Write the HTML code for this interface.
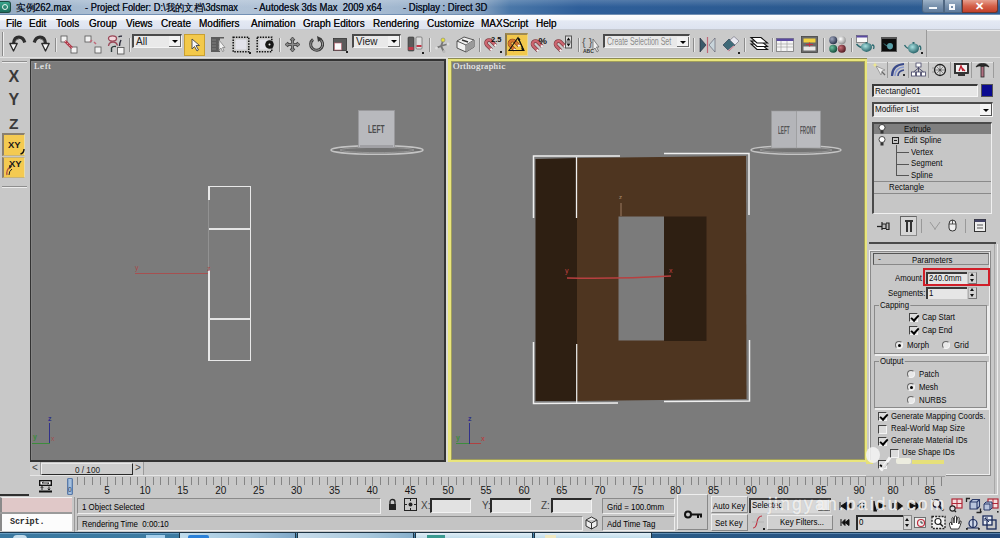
<!DOCTYPE html>
<html><head><meta charset="utf-8">
<style>
*{box-sizing:border-box}
html,body{margin:0;padding:0}
body{width:1000px;height:538px;overflow:hidden;position:relative;background:#c7c7c7;font-family:"Liberation Sans",sans-serif;font-size:10px;color:#111}
.a{position:absolute}
.t{position:absolute;white-space:pre;line-height:1}
svg{position:absolute;overflow:visible}
.mi{position:absolute;top:19px;font-size:10px;color:#0c0c0c;white-space:pre;line-height:1;text-shadow:0 0 .3px #333}
.sep{position:absolute;top:38px;width:2px;height:14px;border-left:1px solid #8c8c8c;border-right:1px solid #e8e8e8}
.dd{position:absolute;top:34px;height:14px;background:#e9e9e9;border-top:2px solid #4a4a4a;border-left:2px solid #4a4a4a;border-bottom:1px solid #f4f4f4;border-right:1px solid #f4f4f4}
.ddb{position:absolute;top:0;right:0;width:12px;height:11px;background:#f2f2f2;border-right:1px solid #6a6a6a;border-bottom:1px solid #6a6a6a}
.ddb:after{content:"";position:absolute;left:3px;top:4px;border-left:3px solid transparent;border-right:3px solid transparent;border-top:3px solid #000}
.ddt{position:absolute;left:2px;top:1px;font-size:10px;color:#222;white-space:pre;line-height:1}
.corner{position:absolute;width:2px;height:2px;background:#222}
</style></head><body>
<style>
.cb{width:9px;height:9px;background:#dcdcdc;border-top:1px solid #444;border-left:1px solid #444;border-right:1px solid #f4f4f4;border-bottom:1px solid #f4f4f4}
.cb:after{content:"";position:absolute;left:1px;top:0.5px;width:5.5px;height:3px;border-left:2px solid #000;border-bottom:2px solid #000;transform:rotate(-48deg);transform-origin:50% 50%}
.cb.off:after{display:none}
.rb{width:8px;height:8px;border-radius:50%;background:#e8e8e8;border:1px solid;border-color:#666 #f4f4f4 #f4f4f4 #666}
.rb.on:after{content:"";position:absolute;left:1.5px;top:1.5px;width:3px;height:3px;border-radius:50%;background:#000}
</style>

<!-- title bar -->
<div class="a" style="left:0;top:0;width:1000px;height:15px;background:linear-gradient(90deg,#93aac2 0%,#a4b9cf 7%,#b4c5d8 15%,#b0c2d6 26%,#a5bad1 38%,#97afc9 44%,#84a0bf 48%,#4a77a8 51%,#2f5f9a 58%,#2b5a90 80%,#2e5d94 100%)"></div>
<div class="a" style="left:0;top:0;width:1000px;height:7px;background:linear-gradient(rgba(255,255,255,.18),rgba(255,255,255,0))"></div>
<div class="a" style="left:0;top:14px;width:1000px;height:1px;background:#7290b4"></div>
<div class="a" style="left:0;top:1px;width:11px;height:12px;background:linear-gradient(#3aa58c,#1d6e5c);border-radius:0 3px 3px 0;border:1px solid #1c4a40;border-left:none"></div>
<div class="a" style="left:2px;top:4px;width:6px;height:6px;border:1.5px solid #e8f4ef;border-radius:50%"></div>
<div class="t" style="left:16px;top:3px;font-size:10px;color:#101828;transform:scaleX(.95);transform-origin:0 0;text-shadow:0 0 .4px #101828">实例262.max</div>
<div class="t" style="left:85px;top:3px;font-size:10px;color:#101828;transform:scaleX(.93);transform-origin:0 0;text-shadow:0 0 .4px #101828">- Project Folder: D:\我的文档\3dsmax</div>
<div class="t" style="left:254px;top:3px;font-size:10px;color:#101828;transform:scaleX(.95);transform-origin:0 0;text-shadow:0 0 .4px #101828">- Autodesk 3ds Max  2009 x64</div>
<div class="t" style="left:403px;top:3px;font-size:10px;color:#101828;transform:scaleX(.95);transform-origin:0 0;text-shadow:0 0 .4px #101828">- Display : Direct 3D</div>
<div class="a" style="left:922px;top:0;width:22px;height:13px;background:linear-gradient(#9fb3c8,#7891ad 50%,#5f7b9c);border:1px solid #4f6782;border-top:none;border-radius:0 0 0 3px"></div>
<div class="a" style="left:929px;top:7px;width:8px;height:2px;background:#f4f8fc"></div>
<div class="a" style="left:944px;top:0;width:18px;height:13px;background:linear-gradient(#9fb3c8,#7891ad 50%,#5f7b9c);border:1px solid #4f6782;border-top:none"></div>
<div class="a" style="left:949px;top:4px;width:6px;height:6px;border:2px solid #f4f8fc"></div>
<div class="a" style="left:962px;top:0;width:36px;height:13px;background:linear-gradient(#e6a190,#d4614a 50%,#c2402a);border:1px solid #70362c;border-top:none;border-radius:0 0 3px 0"></div>
<div class="t" style="left:975px;top:1px;font-size:11px;font-weight:bold;color:#fff">✕</div>

<!-- menu -->
<div class="a" style="left:0;top:15px;width:1000px;height:15px;background:linear-gradient(#fdfdfe 0%,#f6f8fb 30%,#e4e9f3 40%,#dce2ef 100%)"></div>
<div class="a" style="left:0;top:29px;width:1000px;height:1px;background:#c4c8d0"></div>
<div class="mi" style="left:6px">File</div>
<div class="mi" style="left:29px">Edit</div>
<div class="mi" style="left:56px">Tools</div>
<div class="mi" style="left:89px">Group</div>
<div class="mi" style="left:126px">Views</div>
<div class="mi" style="left:161px">Create</div>
<div class="mi" style="left:199px">Modifiers</div>
<div class="mi" style="left:251px">Animation</div>
<div class="mi" style="left:303px">Graph Editors</div>
<div class="mi" style="left:373px">Rendering</div>
<div class="mi" style="left:427px">Customize</div>
<div class="mi" style="left:481px">MAXScript</div>
<div class="mi" style="left:536px">Help</div>

<!-- toolbar -->
<div class="a" style="left:0;top:30px;width:1000px;height:28px;background:#c7c7c7"></div>
<div class="a" style="left:0;top:30px;width:927px;height:27px;background:#cacaca;border-right:1px solid #9a9a9a"></div>
<div class="a" style="left:0;top:57px;width:1000px;height:1px;background:#e2e2e2"></div>
<div class="a" style="left:927px;top:30px;width:73px;height:1px;background:#e9e9e9"></div>
<div class="a" style="left:2px;top:32px;width:2px;height:24px;border-left:1px solid #8a8a8a;border-right:1px solid #f0f0f0"></div>
<!-- undo / redo -->
<svg style="left:9px;top:35px" width="18" height="17" viewBox="0 0 18 17"><path d="M4.5 9 Q5 2.2 10 2.2 Q14 2.2 15.8 7.5" fill="none" stroke="#2e2e2e" stroke-width="3.2"/><path d="M6 7 Q7 4 10 4" fill="none" stroke="#777" stroke-width="0.9"/><path d="M0.8 8.5 L8.2 8.5 L4.5 16 Z" fill="#f6f6f6" stroke="#2a2a2a" stroke-width="1.3" stroke-linejoin="round"/></svg>
<svg style="left:32px;top:35px" width="18" height="17" viewBox="0 0 18 17"><g transform="translate(18,0) scale(-1,1)"><path d="M4.5 9 Q5 2.2 10 2.2 Q14 2.2 15.8 7.5" fill="none" stroke="#2e2e2e" stroke-width="3.2"/><path d="M6 7 Q7 4 10 4" fill="none" stroke="#777" stroke-width="0.9"/><path d="M0.8 8.5 L8.2 8.5 L4.5 16 Z" fill="#f6f6f6" stroke="#2a2a2a" stroke-width="1.3" stroke-linejoin="round"/></g></svg>
<div class="sep" style="left:55px"></div>
<!-- link -->
<svg style="left:60px;top:35px" width="18" height="19" viewBox="0 0 18 19"><rect x="1" y="1" width="6" height="6" fill="#f2f2f2" stroke="#555" stroke-width="0.8"/><rect x="11" y="12" width="6" height="6" fill="#f2f2f2" stroke="#555" stroke-width="0.8"/><path d="M5 6 L12 13" stroke="#b03848" stroke-width="2.5"/><path d="M5 6 L12 13" stroke="#f0c0c8" stroke-width="0.8" stroke-dasharray="1.5 1.5"/></svg>
<svg style="left:84px;top:35px" width="18" height="19" viewBox="0 0 18 19"><rect x="1" y="1" width="6" height="6" fill="#f2f2f2" stroke="#555" stroke-width="0.8"/><rect x="11" y="12" width="6" height="6" fill="#f2f2f2" stroke="#555" stroke-width="0.8"/><path d="M6 7 L8 5 M10 7 L12 9" stroke="#c06878" stroke-width="1.5"/></svg>
<svg style="left:104px;top:32px" width="24" height="24" viewBox="0 0 24 24"><ellipse cx="8.5" cy="6.5" rx="4" ry="2.6" fill="#f2d6dc" stroke="#9a4858" stroke-width="1.3"/><path d="M4.5 14 Q5 10 9 10 Q12.5 10 13.5 13.5" fill="none" stroke="#9a4858" stroke-width="1.3"/><path d="M7.5 20 L7.5 16 Q8.5 14 12 14.5" fill="none" stroke="#2a3a3a" stroke-width="1.4"/><path d="M14.5 5 Q16 3.8 18 4.2 M17 8 Q15.5 11 15.5 14" fill="none" stroke="#2a2a3a" stroke-width="1.4"/><rect x="13.5" y="15.5" width="6.5" height="6.5" fill="#f2f2f2" stroke="#5a5a5a" stroke-width="0.9"/></svg>
<div class="sep" style="left:129px"></div>
<!-- All dropdown -->
<div class="dd" style="left:132px;width:50px"><div class="ddt">All</div><div class="ddb"></div></div>
<!-- select (yellow) -->
<div class="a" style="left:184px;top:34px;width:21px;height:22px;background:#f3c94a;border:1px solid #c9a030"></div>
<svg style="left:191px;top:38px" width="10" height="14" viewBox="0 0 10 14"><path d="M1 1 L1 11 L3.5 8.5 L6 13 L7.5 12 L5 7.5 L8.5 7.5 Z" fill="#f8f8f8" stroke="#444" stroke-width="0.9"/></svg>
<!-- select by name -->
<svg style="left:210px;top:36px" width="16" height="17" viewBox="0 0 16 17"><path d="M1 1 L14 1 L14 2.5 L10 2.5 L10 4 L8.5 5 L10 6 L8.5 8 L10 9 L8.5 11 L10 12 L8.5 14 L10 15 L10 16 L1 16 Z" fill="#5c5c5c"/><path d="M2 4 L6 4 M2 7 L6 7 M2 10 L6 10 M2 13 L6 13" stroke="#8a8a8a" stroke-width="0.8"/><path d="M9 4 L9 14 L11 12 L12.5 15.5 L14 14.8 L12.5 11.5 L15 11.5 Z" fill="#f0f0f0" stroke="#777" stroke-width="0.7"/></svg>
<!-- rect region -->
<svg style="left:232px;top:36px" width="19" height="18" viewBox="0 0 19 18"><rect x="3.5" y="3.5" width="11" height="10" fill="#e2e2ea"/><rect x="1.2" y="1.2" width="15.6" height="14.6" fill="none" stroke="#111" stroke-width="1.5" stroke-dasharray="1.5 1.2"/><rect x="17" y="16" width="2" height="2" fill="#222"/></svg>
<!-- window/crossing -->
<svg style="left:256px;top:36px" width="19" height="17" viewBox="0 0 19 17"><rect x="3.5" y="3.5" width="9" height="10" fill="#e2e2ea"/><rect x="1.2" y="1.2" width="14.6" height="14.6" fill="none" stroke="#111" stroke-width="1.5" stroke-dasharray="1.5 1.2"/><circle cx="13.5" cy="8.5" r="4.3" fill="#151515"/><circle cx="13.5" cy="8.5" r="1" fill="#eee"/></svg>
<div class="sep" style="left:279px"></div>
<!-- move -->
<svg style="left:284px;top:36px" width="17" height="17" viewBox="0 0 17 17"><path d="M8.5 1 L11 4 L9.5 4 L9.5 7.5 L13 7.5 L13 6 L16 8.5 L13 11 L13 9.5 L9.5 9.5 L9.5 13 L11 13 L8.5 16 L6 13 L7.5 13 L7.5 9.5 L4 9.5 L4 11 L1 8.5 L4 6 L4 7.5 L7.5 7.5 L7.5 4 L6 4 Z" fill="#8a8a8a" stroke="#3c3c3c" stroke-width="0.8"/></svg>
<!-- rotate -->
<svg style="left:308px;top:36px" width="17" height="16" viewBox="0 0 17 16"><path d="M5 3.5 A6 6 0 1 0 11.5 3" fill="none" stroke="#3a3a3a" stroke-width="3"/><path d="M5 3.5 A6 6 0 1 0 11.5 3" fill="none" stroke="#9a9a9a" stroke-width="1"/><path d="M9 0 L14 2.5 L10 6 Z" fill="#3a3a3a"/></svg>
<!-- scale -->
<svg style="left:333px;top:38px" width="14" height="13" viewBox="0 0 14 13"><rect x="0.5" y="0.5" width="13" height="12" fill="#5a5a5a" stroke="#333" stroke-width="0.8"/><rect x="1.5" y="5" width="7" height="7" fill="#fafafa" stroke="#c06070" stroke-width="0.6"/></svg>
<div class="corner" style="left:346px;top:51px;width:2px;height:2px"></div>
<!-- View dropdown -->
<div class="dd" style="left:352px;width:49px"><div class="ddt">View</div><div class="ddb"></div></div>
<!-- pivot -->
<svg style="left:407px;top:36px" width="16" height="17" viewBox="0 0 16 17"><rect x="1" y="1" width="6" height="14" rx="1" fill="#5a5a5a" stroke="#333" stroke-width="0.6"/><rect x="9" y="1" width="6" height="12" rx="1" fill="#ddd" stroke="#555" stroke-width="0.6"/><rect x="1.5" y="11" width="5" height="3" fill="#c03848"/><rect x="9.5" y="9" width="5" height="2" fill="#c03848"/></svg>
<div class="corner" style="left:422px;top:52px"></div>
<div class="sep" style="left:429px"></div>
<!-- manipulate -->
<svg style="left:435px;top:37px" width="15" height="16" viewBox="0 0 15 16"><path d="M8 4 L6 9 L1 11 M6 9 L13 7 M6 9 L9 15" stroke="#777" stroke-width="1.8" fill="none"/><circle cx="8" cy="3" r="2" fill="#e6e040" stroke="#777" stroke-width="0.5"/><circle cx="1.5" cy="11" r="1.5" fill="#ddd"/><circle cx="13" cy="7" r="1.5" fill="#ddd"/><circle cx="9" cy="14.5" r="1.5" fill="#bbb"/></svg>
<!-- keyboard override -->
<svg style="left:456px;top:36px" width="19" height="17" viewBox="0 0 19 17"><path d="M1 5 L8 1 L18 4 L18 11 L10 16 L1 12 Z" fill="#f0f0f0" stroke="#444" stroke-width="0.9"/><path d="M1 5 L10 9 L18 4 M10 9 L10 16" stroke="#444" stroke-width="0.9" fill="none"/><path d="M10 9 L18 4 L18 11 L10 16 Z" fill="#9a9a9a"/><path d="M6 4 L12 6" stroke="#333" stroke-width="1.5"/></svg>
<div class="sep" style="left:479px"></div>
<!-- snaps -->
<svg style="left:483px;top:35px" width="20" height="19" viewBox="0 0 20 19"><g transform="translate(6,8) rotate(-45)"><path d="M-3 6.5 L-3 0 A3 3 0 0 1 3 0 L3 6.5" stroke="#7a3a40" stroke-width="3.6" fill="none"/><path d="M-3 6.5 L-3 0 A3 3 0 0 1 3 0 L3 6.5" stroke="#cc6670" stroke-width="2.2" fill="none"/><path d="M-3 5 L-3 7 M3 5 L3 7" stroke="#f4f4f4" stroke-width="2.2"/></g><text x="8" y="6.5" font-family="Liberation Sans" font-weight="bold" font-size="7.5" fill="#111">2.5</text><rect x="17" y="16" width="2" height="2" fill="#222"/></svg>
<div class="a" style="left:505px;top:33px;width:23px;height:23px;background:#f2c84c;border-left:2px solid #8a7a50;border-top:2px solid #a08a50;border-right:1px solid #e8d890;border-bottom:1px solid #e8d890"></div>
<svg style="left:507px;top:35px" width="20" height="20" viewBox="0 0 20 20"><g transform="translate(5.5,8.5) rotate(-45)"><path d="M-3 6.5 L-3 0 A3 3 0 0 1 3 0 L3 6.5" stroke="#8a4a20" stroke-width="3.6" fill="none"/><path d="M-3 6.5 L-3 0 A3 3 0 0 1 3 0 L3 6.5" stroke="#d87830" stroke-width="2.2" fill="none"/><path d="M-3 5 L-3 7 M3 5 L3 7" stroke="#f4f4f4" stroke-width="2.2"/></g><path d="M2 15.5 L17 15.5 L11 2.5 Z" fill="none" stroke="#111" stroke-width="1.1"/><path d="M12 5 L16 14" stroke="#111" stroke-width="1"/><path d="M14 12 L17 15 L15 15.5 Z" fill="#111"/><circle cx="12" cy="4.5" r="1.2" fill="#111"/></svg>
<svg style="left:530px;top:35px" width="20" height="19" viewBox="0 0 20 19"><g transform="translate(5.5,9) rotate(-45)"><path d="M-3 6.5 L-3 0 A3 3 0 0 1 3 0 L3 6.5" stroke="#7a3a40" stroke-width="3.6" fill="none"/><path d="M-3 6.5 L-3 0 A3 3 0 0 1 3 0 L3 6.5" stroke="#cc6670" stroke-width="2.2" fill="none"/><path d="M-3 5 L-3 7 M3 5 L3 7" stroke="#f4f4f4" stroke-width="2.2"/></g><text x="8.5" y="8.5" font-family="Liberation Sans" font-weight="bold" font-size="9.5" fill="#111">%</text></svg>
<svg style="left:553px;top:35px" width="20" height="19" viewBox="0 0 20 19"><g transform="translate(5.5,9) rotate(-45)"><path d="M-3 6.5 L-3 0 A3 3 0 0 1 3 0 L3 6.5" stroke="#7a3a40" stroke-width="3.6" fill="none"/><path d="M-3 6.5 L-3 0 A3 3 0 0 1 3 0 L3 6.5" stroke="#cc6670" stroke-width="2.2" fill="none"/><path d="M-3 5 L-3 7 M3 5 L3 7" stroke="#f4f4f4" stroke-width="2.2"/></g><rect x="12" y="0.5" width="7" height="13" fill="#555"/><rect x="13" y="1.5" width="5" height="5" fill="#ddd"/><rect x="13" y="7.5" width="5" height="5" fill="#ddd"/><path d="M13.5 5.5 L15.5 2.5 L17.5 5.5 Z M13.5 8.5 L15.5 11.5 L17.5 8.5 Z" fill="#111"/></svg>
<div class="sep" style="left:578px"></div>
<!-- named sel -->
<svg style="left:582px;top:36px" width="19" height="18" viewBox="0 0 19 18"><text x="0" y="10" font-family="Liberation Sans" font-size="11" fill="#555">{ }</text><text x="1" y="17" font-family="Liberation Sans" font-weight="bold" font-size="5" fill="#333">ABC</text><path d="M11 3 L11 14 L13 12 L15 16 L16.5 15 L14.5 11 L17 11 Z" fill="#eee" stroke="#666" stroke-width="0.8"/></svg>
<div class="dd" style="left:603px;width:87px"><div class="ddt" style="color:#8c8c8c;font-size:10px;transform:scaleX(.7);transform-origin:0 0">Create Selection Set</div><div class="ddb" style="top:1px;height:10px"></div></div>
<div class="sep" style="left:693px"></div>
<!-- mirror -->
<svg style="left:699px;top:37px" width="17" height="16" viewBox="0 0 17 16"><path d="M1 1 L7 8 L1 15 Z" fill="#3a5a6a" stroke="#223" stroke-width="0.6"/><path d="M16 1 L10 8 L16 15 Z" fill="#c8d4da" stroke="#556" stroke-width="0.6"/><path d="M8.5 0 L8.5 16" stroke="#c06878" stroke-width="1.2"/></svg>
<!-- align -->
<svg style="left:722px;top:36px" width="18" height="18" viewBox="0 0 18 18"><path d="M1 9 L7 3 L13 9 L7 15 Z" fill="#3f6a78" stroke="#234" stroke-width="0.6"/><path d="M8 4 L12 0.5 L17 5 L13 9 Z" fill="#e8e8f0" stroke="#667" stroke-width="0.6"/><path d="M6 15 L12 10" stroke="#d89aa8" stroke-width="1.5"/><rect x="16" y="16" width="2" height="2" fill="#222"/></svg>
<div class="sep" style="left:744px"></div>
<!-- layers -->
<svg style="left:750px;top:36px" width="19" height="16" viewBox="0 0 19 16"><path d="M1 8 L11 8 L17.5 13.5 L7 13.5 Z" fill="#fff" stroke="#111" stroke-width="1.1"/><path d="M1 5 L11 5 L17.5 10.5 L7 10.5 Z" fill="#fff" stroke="#111" stroke-width="1.1"/><path d="M1 1.5 L11 1.5 L17.5 7 L7 7 Z" fill="#fff" stroke="#111" stroke-width="1.1"/></svg>
<div class="sep" style="left:772px"></div>
<!-- curve editor -->
<svg style="left:776px;top:38px" width="18" height="14" viewBox="0 0 18 14"><rect x="0.5" y="0.5" width="17" height="13" fill="#f4f4f4" stroke="#777" stroke-width="0.8"/><rect x="0.5" y="0.5" width="17" height="2.5" fill="#5a4aa0"/><path d="M0 6 L18 6 M0 9 L18 9 M5 3 L5 14 M11 3 L11 14" stroke="#999" stroke-width="0.6"/></svg>
<!-- schematic -->
<svg style="left:801px;top:36px" width="17" height="17" viewBox="0 0 17 17"><rect x="0.5" y="0.5" width="16" height="16" fill="#6a6a6a" stroke="#444" stroke-width="0.8"/><rect x="2.5" y="2.5" width="12" height="4" fill="#f0d040"/><rect x="2.5" y="10.5" width="12" height="4" fill="#e8e8e8"/><path d="M8.5 6.5 L8.5 10.5 M5 8.5 L12 8.5" stroke="#c03040" stroke-width="1.2"/></svg>
<div class="sep" style="left:823px"></div>
<!-- material editor -->
<svg style="left:829px;top:36px" width="17" height="17" viewBox="0 0 17 17"><defs><radialGradient id="g1" cx=".35" cy=".35" r=".7"><stop offset="0" stop-color="#a0a8c0"/><stop offset="1" stop-color="#283048"/></radialGradient><radialGradient id="g2" cx=".35" cy=".35" r=".7"><stop offset="0" stop-color="#fff"/><stop offset="1" stop-color="#909090"/></radialGradient><radialGradient id="g3" cx=".35" cy=".35" r=".7"><stop offset="0" stop-color="#70c0a0"/><stop offset="1" stop-color="#104838"/></radialGradient><radialGradient id="g4" cx=".35" cy=".35" r=".7"><stop offset="0" stop-color="#c87078"/><stop offset="1" stop-color="#501820"/></radialGradient><radialGradient id="tp" cx=".4" cy=".35" r=".7"><stop offset="0" stop-color="#a8e0e0"/><stop offset="1" stop-color="#1e5a60"/></radialGradient></defs><circle cx="4.2" cy="4.2" r="4" fill="url(#g1)"/><circle cx="12.8" cy="4.2" r="4" fill="url(#g2)"/><circle cx="4.2" cy="12.8" r="4" fill="url(#g3)"/><circle cx="12.8" cy="12.8" r="4" fill="url(#g4)"/></svg>
<div class="sep" style="left:851px"></div>
<!-- render setup -->
<svg style="left:856px;top:35px" width="19" height="18" viewBox="0 0 19 18"><rect x="0.5" y="0.5" width="11" height="7" fill="#f8f8f8" stroke="#666" stroke-width="0.7"/><rect x="0.5" y="0.5" width="11" height="2" fill="#5a4aa0"/><path d="M5 12 Q5 8 10.5 8 Q16 8 16 12 Q16 16 10.5 17 Q5 16 5 12 Z" fill="url(#tp)"/><path d="M5 12.5 Q2 11 0.5 9" stroke="#2a6a70" stroke-width="1.4" fill="none"/><path d="M16 10 Q19 10 17.5 14" stroke="#2a6a70" stroke-width="1.3" fill="none"/><rect x="9.5" y="7" width="2" height="1.5" fill="#2a6a70"/></svg>
<!-- rendered frame window -->
<svg style="left:881px;top:37px" width="16" height="15" viewBox="0 0 16 15"><rect x="0" y="0" width="16" height="15" fill="#555"/><rect x="1" y="2" width="14" height="12" fill="#0c0c0c"/><path d="M6 9 Q6 6 9 6 Q12 6 12 9 Q12 12 9 12.5 Q6 12 6 9 Z" fill="#5aa0a8"/><path d="M6 9 Q4 8 3 6.5" stroke="#3a8088" stroke-width="1" fill="none"/></svg>
<!-- quick render -->
<svg style="left:904px;top:41px" width="17" height="13" viewBox="0 0 17 13"><path d="M4 7 Q4 2.5 9.5 2.5 Q15 2.5 15 7 Q15 11.5 9.5 12.5 Q4 11.5 4 7 Z" fill="url(#tp)"/><path d="M4 7.5 Q1.5 6 0.5 4" stroke="#2a6a70" stroke-width="1.4" fill="none"/><path d="M15 5 Q17.5 5 16.5 9" stroke="#2a6a70" stroke-width="1.3" fill="none"/><rect x="8.5" y="1" width="2" height="1.8" fill="#2a6a70"/></svg>
<div class="corner" style="left:921px;top:52px"></div>

<!-- left axis toolbar -->
<div class="a" style="left:0;top:58px;width:30px;height:437px;background:#c8c8c8"></div>
<div class="a" style="left:2px;top:61px;width:25px;height:1px;background:#8e8e8e"></div>
<div class="a" style="left:2px;top:62px;width:25px;height:1px;background:#ececec"></div>
<div class="t" style="left:8.5px;top:68.5px;font-size:16px;font-weight:bold;color:#3a3a3a">X</div>
<div class="t" style="left:8.5px;top:92px;font-size:16px;font-weight:bold;color:#3a3a3a">Y</div>
<div class="t" style="left:9px;top:115.5px;font-size:15.5px;font-weight:bold;color:#3a3a3a">Z</div>
<div class="a" style="left:2px;top:133px;width:23px;height:23px;background:#f4ca52;border-left:2px solid #8a8070;border-top:2px solid #8a8070;border-right:1px solid #e8dca8;border-bottom:1px solid #c8b478"></div>
<div class="t" style="left:7.5px;top:141px;font-size:9px;font-weight:bold;color:#1a1a1a;transform:scaleX(1.05);transform-origin:0 0">XY</div>
<svg style="left:20px;top:149px" width="5" height="6" viewBox="0 0 5 6"><path d="M4 0 Q4 4 0.5 5" stroke="#111" stroke-width="1.4" fill="none"/></svg>
<div class="a" style="left:2px;top:157px;width:23px;height:21px;background:#f4ca52;border-left:2px solid #8a8070;border-top:1px solid #c8b478;border-right:1px solid #e8dca8;border-bottom:1px solid #c8b478"></div>
<div class="t" style="left:9px;top:160px;font-size:9px;font-weight:bold;color:#1a1a1a;transform:scaleX(1.05);transform-origin:0 0">XY</div>
<svg style="left:5px;top:164px" width="11" height="12" viewBox="0 0 11 12"><path d="M2 11 Q1 6 5 3" stroke="#b85040" stroke-width="1.3" fill="none"/><path d="M4 11 Q4 7 7 5" stroke="#222" stroke-width="1" fill="none"/><path d="M4 1 L7 2.5 L4.5 5 Z" fill="#222"/></svg>
<div class="a" style="left:2px;top:186px;width:25px;height:1px;background:#8e8e8e"></div>
<div class="a" style="left:2px;top:187px;width:25px;height:1px;background:#ececec"></div>
<div class="a" style="left:0;top:494px;width:29px;height:1.5px;background:#303030"></div>

<!-- left viewport -->
<div class="a" style="left:29.5px;top:59px;width:416.5px;height:403px;background:#333"></div>
<div class="a" style="left:31px;top:61px;width:413px;height:399px;background:#7b7b7b;box-shadow:inset 1px 1px 0 #858585"></div>
<div class="t" style="left:34px;top:62px;font-family:'Liberation Serif',serif;font-size:9px;color:#e2e2e2;letter-spacing:0.6px;text-shadow:0 0 .5px #ddd">Left</div>
<!-- view cube -->
<svg style="left:328px;top:108px" width="98" height="50" viewBox="0 0 98 50"><ellipse cx="49" cy="42" rx="46" ry="4.2" fill="#6e6e6e" stroke="#c4c4c4" stroke-width="1.6"/><ellipse cx="49" cy="42" rx="37" ry="2.6" fill="#737373" stroke="#a0a0a0" stroke-width="0.8"/><rect x="30.5" y="2.5" width="36" height="37" fill="#b8b9bd" stroke="#9a9a9c" stroke-width="0.8"/><rect x="32" y="37" width="33" height="3" fill="#a0a0a4"/></svg>
<div class="t" style="left:368px;top:124px;font-size:11px;font-weight:bold;color:#4c4c4c;transform:scaleX(.6);transform-origin:0 0">LEFT</div>
<!-- object wireframe -->
<div class="a" style="left:208px;top:186px;width:43px;height:175px;border:1.5px solid #e8e8e8;border-left:none"></div>
<div class="a" style="left:208px;top:186px;width:1.5px;height:14px;background:#e8e8e8"></div>
<div class="a" style="left:208px;top:200px;width:1px;height:70px;background:#929292"></div>
<div class="a" style="left:208px;top:270px;width:1.5px;height:91px;background:#e8e8e8"></div>
<div class="a" style="left:209px;top:228px;width:42px;height:1.5px;background:#e4e4e4"></div>
<div class="a" style="left:209px;top:318px;width:42px;height:1.5px;background:#e4e4e4"></div>
<div class="a" style="left:135px;top:272.5px;width:73px;height:1.2px;background:#a65050"></div>
<div class="t" style="left:135px;top:264px;font-size:7px;color:#a84848">y</div>
<div class="t" style="left:207px;top:265px;font-size:7px;color:#a84848">z</div>
<!-- tripod -->
<div class="a" style="left:49px;top:423px;width:1.3px;height:21px;background:#30308a"></div>
<div class="a" style="left:32px;top:442.5px;width:18px;height:1.3px;background:#3c8c3c"></div>
<div class="t" style="left:48px;top:415px;font-size:7px;font-weight:bold;color:#30308a">z</div>
<div class="t" style="left:33px;top:433px;font-size:7px;font-weight:bold;color:#3c8c3c">y</div>
<div class="t" style="left:51px;top:435px;font-size:7px;color:#a05050">x</div>

<!-- ortho viewport -->
<div class="a" style="left:446px;top:57px;width:2px;height:406px;background:#dcdcd4"></div>
<div class="a" style="left:448px;top:58px;width:418.5px;height:405px;background:#e9e57c;border-top:1px solid #8e8c52"></div>
<div class="a" style="left:452px;top:62px;width:412px;height:397px;background:#7b7b7b;box-shadow:0 0 0 1px #a09e5c"></div>
<div class="t" style="left:453px;top:62px;font-family:'Liberation Serif',serif;font-size:9px;color:#e2e2e2;letter-spacing:0.4px;text-shadow:0 0 .5px #ddd">Orthographic</div>
<!-- view cube -->
<svg style="left:748px;top:108px" width="98" height="50" viewBox="0 0 98 50"><ellipse cx="48" cy="42" rx="45" ry="4.2" fill="#6e6e6e" stroke="#c4c4c4" stroke-width="1.6"/><ellipse cx="48" cy="42" rx="36" ry="2.6" fill="#737373" stroke="#a0a0a0" stroke-width="0.8"/><rect x="23.5" y="3" width="25" height="37" fill="#b4b5b9" stroke="#9a9a9c" stroke-width="0.6"/><rect x="48.5" y="3" width="24" height="37" fill="#babbbf" stroke="#9a9a9c" stroke-width="0.6"/></svg>
<div class="t" style="left:778px;top:124.5px;font-size:10.5px;font-weight:bold;color:#555;transform:scaleX(.44);transform-origin:0 0">LEFT</div>
<div class="t" style="left:800px;top:124.5px;font-size:10.5px;font-weight:bold;color:#555;transform:scaleX(.44);transform-origin:0 0">FRONT</div>
<!-- object -->
<svg style="left:451px;top:61px" width="413" height="399" viewBox="451 61 413 399">
<polygon points="577,158 746,156 746.5,399 577,401" fill="#4e3520"/>
<polygon points="535.5,159 577,158 577,401 535.5,401" fill="#2e1f12"/>
<rect x="618.5" y="216.5" width="45.5" height="124" fill="#7b7b7b"/>
<rect x="664" y="216.5" width="42.5" height="124.5" fill="#2e1f12"/>
<path d="M533.5 218 L533.5 156 L620 156" stroke="#f0f0f0" stroke-width="1.5" fill="none"/>
<path d="M664 153.5 L749 153.5 L749 215" stroke="#f0f0f0" stroke-width="1.5" fill="none"/>
<path d="M576.5 157 L576.5 218" stroke="#f0f0f0" stroke-width="1.3" fill="none"/>
<path d="M533.5 342 L533.5 403.5 L618 403" stroke="#f0f0f0" stroke-width="1.5" fill="none"/>
<path d="M576.7 344 L576.7 403" stroke="#f0f0f0" stroke-width="1.2" fill="none"/>
<path d="M749.5 340 L749.5 401 L664 401.5" stroke="#f0f0f0" stroke-width="1.5" fill="none"/>
<path d="M567 278 Q620 279 671 276" stroke="#b84040" stroke-width="1.3" fill="none"/>
<path d="M621 203 L621 216" stroke="#9a7a60" stroke-width="1" fill="none"/>
</svg>
<div class="t" style="left:565px;top:267px;font-size:7px;color:#c04040">y</div>
<div class="t" style="left:669px;top:267px;font-size:7px;color:#c04040">x</div>
<div class="t" style="left:619px;top:194px;font-size:6px;color:#b09070">z</div>
<!-- tripod -->
<div class="a" style="left:468.5px;top:423px;width:1.5px;height:21px;background:#30308a"></div>
<div class="a" style="left:456px;top:442.5px;width:13px;height:1.3px;background:#3c8c3c"></div>
<div class="a" style="left:469.5px;top:442.5px;width:11px;height:1.3px;background:#b04040"></div>
<div class="t" style="left:468px;top:415px;font-size:7px;font-weight:bold;color:#30308a">z</div>
<div class="t" style="left:456px;top:434px;font-size:7px;font-weight:bold;color:#3c8c3c">y</div>
<div class="t" style="left:481px;top:435px;font-size:7px;font-weight:bold;color:#b04848">x</div>

<!-- command panel -->
<div class="a" style="left:867px;top:58px;width:133px;height:420px;background:#c8c8c8"></div>
<!-- tabs -->
<div class="a" style="left:867px;top:62px;width:127px;height:17px;background:#cbcbcb;border-top:1px solid #e4e4e4"></div>
<div class="a" style="left:887px;top:62px;width:1px;height:16px;background:#9c9c9c"></div>
<div class="a" style="left:908px;top:62px;width:1px;height:16px;background:#9c9c9c"></div>
<div class="a" style="left:928px;top:62px;width:1px;height:16px;background:#9c9c9c"></div>
<div class="a" style="left:950px;top:62px;width:1px;height:16px;background:#9c9c9c"></div>
<div class="a" style="left:971px;top:62px;width:1px;height:16px;background:#9c9c9c"></div>
<div class="a" style="left:993px;top:62px;width:1px;height:16px;background:#9c9c9c"></div>
<svg style="left:872px;top:62px" width="14" height="15" viewBox="0 0 14 15"><path d="M5 5 L13 13" stroke="#666" stroke-width="1.2"/><path d="M4 4 L9 13 L10 9 L13 8 Z" fill="#eee" stroke="#777" stroke-width="0.6"/><path d="M3 0 L3.6 2.6 L6 3 L3.6 3.6 L3 6 L2.4 3.6 L0 3 L2.4 2.4 Z" fill="#f8f080"/></svg>
<svg style="left:891px;top:63px" width="15" height="14" viewBox="0 0 15 14"><path d="M1 13 Q1 2 13 1" stroke="#3a4a8a" stroke-width="2.2" fill="none"/><path d="M4 13 Q4 5 13 4" stroke="#8a9ad0" stroke-width="1.6" fill="none"/><path d="M7 13 Q7 8 13 7" stroke="#3a4a8a" stroke-width="1.6" fill="none"/><rect x="12" y="11" width="2" height="2" fill="#333"/></svg>
<svg style="left:911px;top:62px" width="15" height="15" viewBox="0 0 15 15"><rect x="5" y="1" width="5" height="4" fill="#fff" stroke="#446" stroke-width="0.8"/><rect x="0.5" y="10" width="4" height="4" fill="#fff" stroke="#446" stroke-width="0.8"/><rect x="5.5" y="10" width="4" height="4" fill="#fff" stroke="#446" stroke-width="0.8"/><rect x="10.5" y="10" width="4" height="4" fill="#fff" stroke="#446" stroke-width="0.8"/><path d="M7.5 5 L7.5 10 M2.5 10 L7.5 6 L12.5 10" stroke="#446" stroke-width="0.9" fill="none"/></svg>
<svg style="left:932px;top:63px" width="15" height="14" viewBox="0 0 15 14"><circle cx="8" cy="7" r="5.5" fill="#d8d8d8" stroke="#222" stroke-width="1.3"/><circle cx="8" cy="7" r="1.3" fill="#333"/><path d="M8 2 L8 12 M3 7 L13 7 M4.5 3.5 L11.5 10.5 M11.5 3.5 L4.5 10.5" stroke="#555" stroke-width="0.6"/><path d="M0 5 L2 5 M0 9 L2 9" stroke="#999" stroke-width="1"/></svg>
<svg style="left:954px;top:63px" width="15" height="14" viewBox="0 0 15 14"><rect x="0.5" y="0.5" width="14" height="10" fill="#333" stroke="#222" stroke-width="0.8"/><rect x="2" y="2" width="11" height="7" fill="#f2f2f2"/><path d="M5 8 L7 3 L9 8 M8 5 L11 8" stroke="#c02030" stroke-width="1.4" fill="none"/><rect x="4" y="11" width="7" height="2" fill="#333"/></svg>
<svg style="left:975px;top:62px" width="15" height="16" viewBox="0 0 15 16"><path d="M1 5 Q3 1 7.5 1.5 Q12 1 14 5 Q11 3.5 9 4 L9 4.5 L6 4.5 L6 4 Q4 3.5 1 5 Z" fill="#2a2a2a" stroke="#111" stroke-width="0.6"/><rect x="6" y="4.5" width="3" height="10.5" fill="#b07080" stroke="#2a2a2a" stroke-width="0.8"/></svg>
<!-- name field -->
<div class="a" style="left:872px;top:84px;width:106px;height:13px;background:#e6e6e6;border-top:2px solid #3a3a3a;border-left:2px solid #3a3a3a;border-bottom:1px solid #f6f6f6;border-right:1px solid #f6f6f6"></div>
<div class="t" style="left:875px;top:87px;font-size:9px;color:#111;transform:scaleX(.9);transform-origin:0 0">Rectangle01</div>
<div class="a" style="left:981px;top:84px;width:12px;height:13px;background:#0a0a90;border:1px solid #555"></div>
<!-- modifier list -->
<div class="a" style="left:872px;top:102px;width:121px;height:15px;background:#e6e6e6;border-top:2px solid #4a4a4a;border-left:2px solid #4a4a4a;border-bottom:1px solid #f6f6f6;border-right:1px solid #f6f6f6"></div>
<div class="t" style="left:875px;top:105px;font-size:9px;color:#111;transform:scaleX(.9);transform-origin:0 0">Modifier List</div>
<div class="a" style="left:980px;top:104px;width:12px;height:12px;background:#f4f4f4;border-right:1px solid #555;border-bottom:1px solid #555"></div>
<div class="a" style="left:983px;top:109px;border-left:3px solid transparent;border-right:3px solid transparent;border-top:3px solid #000"></div>
<!-- stack -->
<div class="a" style="left:872px;top:122px;width:120px;height:92px;background:#c6c6c6;border-top:2px solid #4a4a4a;border-left:2px solid #4a4a4a;border-bottom:1px solid #f0f0f0;border-right:1px solid #f0f0f0"></div>
<div class="a" style="left:874px;top:124px;width:117px;height:10px;background:#7f7f7f"></div>
<svg style="left:878px;top:124px" width="8" height="10" viewBox="0 0 8 10"><circle cx="4" cy="3.5" r="3" fill="#fff" stroke="#222" stroke-width="0.8"/><rect x="2.5" y="6.5" width="3" height="3" fill="#333"/></svg>
<div class="t" style="left:904px;top:125px;font-size:8.5px;color:#0a0a0a;transform:scaleX(.92);transform-origin:0 0">Extrude</div>
<svg style="left:878px;top:136px" width="8" height="10" viewBox="0 0 8 10"><circle cx="4" cy="3.5" r="3" fill="#fff" stroke="#222" stroke-width="0.8"/><rect x="2.5" y="6.5" width="3" height="3" fill="#333"/></svg>
<div class="a" style="left:892px;top:137px;width:7px;height:7px;border:1px solid #222"></div>
<div class="a" style="left:894px;top:140px;width:3px;height:1px;background:#222"></div>
<div class="t" style="left:904px;top:136px;font-size:8.5px;color:#0a0a0a;transform:scaleX(.92);transform-origin:0 0">Edit Spline</div>
<div class="a" style="left:896px;top:145px;width:1px;height:31px;background:#555"></div>
<div class="a" style="left:896px;top:152px;width:13px;height:1px;background:#555"></div>
<div class="a" style="left:896px;top:164px;width:13px;height:1px;background:#555"></div>
<div class="a" style="left:896px;top:175px;width:13px;height:1px;background:#555"></div>
<div class="t" style="left:911px;top:148px;font-size:8.5px;color:#0a0a0a;transform:scaleX(.92);transform-origin:0 0">Vertex</div>
<div class="t" style="left:911px;top:159px;font-size:8.5px;color:#0a0a0a;transform:scaleX(.92);transform-origin:0 0">Segment</div>
<div class="t" style="left:911px;top:171px;font-size:8.5px;color:#0a0a0a;transform:scaleX(.92);transform-origin:0 0">Spline</div>
<div class="a" style="left:874px;top:181px;width:117px;height:1px;background:#8a8a8a"></div>
<div class="t" style="left:889px;top:183px;font-size:8.5px;color:#0a0a0a;transform:scaleX(.92);transform-origin:0 0">Rectangle</div>
<div class="a" style="left:874px;top:193px;width:117px;height:1px;background:#8a8a8a"></div>
<!-- stack buttons -->
<svg style="left:877px;top:221px" width="13" height="10" viewBox="0 0 13 10"><path d="M0 5.5 L5 5.5" stroke="#222" stroke-width="1.3"/><path d="M5 1 L5 9 M5 3 L9 3 L9 7.5 L5 7.5 M9 2 L12 2 L12 8.5 L9 8.5" stroke="#222" stroke-width="1.2" fill="#bbb"/></svg>
<div class="a" style="left:900px;top:216px;width:17px;height:20px;background:#d6d6d6;border:1px solid #8a8a8a;border-top-color:#666;border-left-color:#666"></div>
<div class="a" style="left:906px;top:220px;width:2px;height:12px;background:#333"></div>
<div class="a" style="left:910px;top:220px;width:2px;height:12px;background:#333"></div>
<div class="a" style="left:905px;top:220px;width:8px;height:2px;background:#333"></div>
<div class="a" style="left:921px;top:219px;width:1px;height:14px;background:#999"></div>
<svg style="left:929px;top:221px" width="12" height="10" viewBox="0 0 12 10"><path d="M1 1 L6 8 L11 1 M6 8 L6 9" stroke="#999" stroke-width="1" fill="none"/></svg>
<svg style="left:948px;top:219px" width="9" height="13" viewBox="0 0 9 13"><path d="M1 5 Q1 1 4.5 1 Q8 1 8 5 L8 9 Q8 12 4.5 12 Q1 12 1 9 Z" fill="#eee" stroke="#333" stroke-width="1"/><path d="M4.5 1 L4.5 5 M1 5 L8 5" stroke="#333" stroke-width="0.8"/></svg>
<div class="a" style="left:965px;top:219px;width:1px;height:14px;background:#999"></div>
<svg style="left:974px;top:219px" width="12" height="13" viewBox="0 0 12 13"><rect x="0.5" y="0.5" width="11" height="12" fill="#eee" stroke="#333" stroke-width="1"/><rect x="0.5" y="0.5" width="11" height="2.5" fill="#446"/><path d="M3 6 L9 6 M3 9 L9 9" stroke="#555" stroke-width="1"/></svg>
<div class="a" style="left:869px;top:242px;width:127px;height:2px;background:#4a4a4a"></div><div class="a" style="left:994px;top:244px;width:1px;height:250px;background:#a8a8a8"></div><div class="a" style="left:997px;top:244px;width:1px;height:251px;background:#eeeeee"></div><div class="a" style="left:943px;top:494px;width:55px;height:1px;background:#eeeeee"></div>
<!-- parameters rollout -->
<div class="a" style="left:869px;top:250px;width:122px;height:226px;border:1px solid #eee;border-right-color:#8a8a8a;border-bottom-color:#8a8a8a;box-shadow:inset 1px 1px 0 #8a8a8a, inset -1px -1px 0 #eee"></div>
<div class="a" style="left:873px;top:253px;width:116px;height:12px;background:#c4c4c4;border:1px solid #555;border-right-color:#888;border-bottom-color:#888"></div>
<div class="t" style="left:878px;top:255px;font-size:9px;color:#333">-</div>
<div class="t" style="left:912px;top:256px;font-size:8.5px;color:#0a0a0a;transform:scaleX(.92);transform-origin:0 0">Parameters</div>
<div class="t" style="left:895px;top:274px;font-size:8.5px;color:#0a0a0a;transform:scaleX(.92);transform-origin:0 0">Amount</div>
<div class="a" style="left:926px;top:272px;width:41px;height:12px;background:#e6e6e6;border-top:2px solid #3a3a3a;border-left:2px solid #3a3a3a"></div>
<div class="t" style="left:929px;top:274px;font-size:8.5px;color:#0a0a0a;transform:scaleX(.92);transform-origin:0 0">240.0mm</div>
<div class="a" style="left:968px;top:272px;width:9px;height:12px;background:#d2d2d2;border:1px solid #b0b0b0;border-right-color:#777;border-bottom-color:#777"></div>
<div class="a" style="left:970px;top:273px;border-left:2.5px solid transparent;border-right:2.5px solid transparent;border-bottom:3px solid #111"></div>
<div class="a" style="left:970px;top:279px;border-left:2.5px solid transparent;border-right:2.5px solid transparent;border-top:3px solid #111"></div>
<div class="a" style="left:922.5px;top:267.5px;width:67px;height:18.5px;border:2.2px solid #d01e28"></div>
<div class="t" style="left:888px;top:289px;font-size:8.5px;color:#0a0a0a;transform:scaleX(.92);transform-origin:0 0">Segments:</div>
<div class="a" style="left:926px;top:287px;width:41px;height:12px;background:#e6e6e6;border-top:2px solid #3a3a3a;border-left:2px solid #3a3a3a"></div>
<div class="t" style="left:929px;top:289px;font-size:8.5px;color:#0a0a0a;transform:scaleX(.92);transform-origin:0 0">1</div>
<div class="a" style="left:968px;top:287px;width:9px;height:12px;background:#d2d2d2;border:1px solid #b0b0b0;border-right-color:#777;border-bottom-color:#777"></div>
<div class="a" style="left:970px;top:288px;border-left:2.5px solid transparent;border-right:2.5px solid transparent;border-bottom:3px solid #111"></div>
<div class="a" style="left:970px;top:294px;border-left:2.5px solid transparent;border-right:2.5px solid transparent;border-top:3px solid #111"></div>
<!-- capping -->
<div class="a" style="left:874px;top:305px;width:114px;height:50px;border:1px solid #8a8a8a;border-right-color:#eee;border-bottom-color:#eee;box-shadow:inset -1px -1px 0 #8a8a8a, 1px 1px 0 #eee"></div>
<div class="t" style="left:879px;top:301px;font-size:8.5px;color:#0a0a0a;transform:scaleX(.92);transform-origin:0 0;background:#c8c8c8;padding:0 1px">Capping</div>
<div class="a cb" style="left:909px;top:313px"></div>
<div class="t" style="left:922px;top:313px;font-size:8.5px;color:#0a0a0a;transform:scaleX(.92);transform-origin:0 0">Cap Start</div>
<div class="a cb" style="left:909px;top:326px"></div>
<div class="t" style="left:922px;top:326px;font-size:8.5px;color:#0a0a0a;transform:scaleX(.92);transform-origin:0 0">Cap End</div>
<div class="a rb on" style="left:895px;top:341px"></div>
<div class="t" style="left:907px;top:341px;font-size:8.5px;color:#0a0a0a;transform:scaleX(.92);transform-origin:0 0">Morph</div>
<div class="a rb" style="left:942px;top:341px"></div>
<div class="t" style="left:954px;top:341px;font-size:8.5px;color:#0a0a0a;transform:scaleX(.92);transform-origin:0 0">Grid</div>
<!-- output -->
<div class="a" style="left:874px;top:361px;width:114px;height:48px;border:1px solid #8a8a8a;border-right-color:#eee;border-bottom-color:#eee;box-shadow:inset -1px -1px 0 #8a8a8a, 1px 1px 0 #eee"></div>
<div class="t" style="left:879px;top:357px;font-size:8.5px;color:#0a0a0a;transform:scaleX(.92);transform-origin:0 0;background:#c8c8c8;padding:0 1px">Output</div>
<div class="a rb" style="left:907px;top:370px"></div>
<div class="t" style="left:919px;top:370px;font-size:8.5px;color:#0a0a0a;transform:scaleX(.92);transform-origin:0 0">Patch</div>
<div class="a rb on" style="left:907px;top:383px"></div>
<div class="t" style="left:919px;top:383px;font-size:8.5px;color:#0a0a0a;transform:scaleX(.92);transform-origin:0 0">Mesh</div>
<div class="a rb" style="left:907px;top:396px"></div>
<div class="t" style="left:919px;top:396px;font-size:8.5px;color:#0a0a0a;transform:scaleX(.92);transform-origin:0 0">NURBS</div>
<div class="a cb" style="left:878px;top:412px"></div>
<div class="t" style="left:891px;top:412px;font-size:8.5px;color:#0a0a0a;transform:scaleX(.92);transform-origin:0 0">Generate Mapping Coords.</div>
<div class="a cb off" style="left:878px;top:425px"></div>
<div class="t" style="left:891px;top:424px;font-size:8.5px;color:#0a0a0a;transform:scaleX(.92);transform-origin:0 0">Real-World Map Size</div>
<div class="a cb" style="left:878px;top:437px"></div>
<div class="t" style="left:891px;top:436px;font-size:8.5px;color:#0a0a0a;transform:scaleX(.92);transform-origin:0 0">Generate Material IDs</div>
<div class="a cb off" style="left:890px;top:449px"></div>
<div class="t" style="left:902px;top:448px;font-size:8.5px;color:#0a0a0a;transform:scaleX(.92);transform-origin:0 0">Use Shape IDs</div>
<div class="a cb" style="left:878px;top:460px"></div>

<!-- time slider -->
<div class="a" style="left:30px;top:462px;width:837px;height:14px;background:#c8c8c8"></div>
<div class="a" style="left:30px;top:462px;width:11px;height:13px;background:#cfcfcf;border-right:1px solid #9a9a9a"></div>
<div class="t" style="left:32px;top:463px;font-size:10px;color:#444">&lt;</div>
<div class="a" style="left:41px;top:462.5px;width:91.5px;height:12.5px;background:#cdcdcd;border-bottom:1.5px solid #2a2a2a;border-right:1px solid #2a2a2a;border-left:1px solid #f0f0f0;border-top:1px solid #e8e8e8"></div>
<div class="t" style="left:74.5px;top:464.5px;font-size:9.5px;color:#1a1a1a;transform:scaleX(.86);transform-origin:0 0">0 / 100</div>
<div class="a" style="left:133px;top:462px;width:11px;height:13px;background:#cfcfcf;border-right:1px solid #9a9a9a"></div>
<div class="t" style="left:135px;top:463px;font-size:10px;color:#444">&gt;</div>
<div class="a" style="left:30px;top:475px;width:837px;height:1px;background:#e6e6e6"></div>
<!-- track bar -->
<div class="a" style="left:30px;top:476px;width:920px;height:20px;background:#c8c8c8"></div>
<svg style="left:39px;top:480px" width="13" height="13" viewBox="0 0 13 13"><rect x="0.7" y="0.7" width="11.6" height="4.6" fill="#fafafa" stroke="#111" stroke-width="1.4"/><path d="M3 3 L10 3 M3 3 L4.5 2 M10 3 L8.5 4" stroke="#111" stroke-width="0.9"/><path d="M3 6.5 L3 10 M1.8 7.8 L3 6.5 L4.2 7.8 M10 6.5 L10 10 M8.8 8.7 L10 10 L11.2 8.7" stroke="#111" stroke-width="0.9" fill="none"/><rect x="0" y="10.5" width="13" height="2" fill="#111"/></svg>
<div class="a" style="left:67px;top:478px;width:6px;height:17px;background:linear-gradient(90deg,#7b9cc4,#b4cce6,#7b9cc4);border:1px solid #5a7aa8;border-radius:1px"></div>
<div class="t" style="left:67.5px;top:486px;font-size:8px;color:#2a3a5a;transform:scaleX(.8);transform-origin:0 0">0</div>
<div class="a" style="left:76.8px;top:477px;width:1px;height:8px;background:#858585"></div>
<div class="a" style="left:84.4px;top:477px;width:1px;height:8px;background:#858585"></div>
<div class="a" style="left:91.9px;top:477px;width:1px;height:8px;background:#858585"></div>
<div class="a" style="left:99.5px;top:477px;width:1px;height:8px;background:#858585"></div>
<div class="a" style="left:107.1px;top:477px;width:1px;height:9px;background:#858585"></div>
<div class="a" style="left:114.7px;top:477px;width:1px;height:8px;background:#858585"></div>
<div class="a" style="left:122.3px;top:477px;width:1px;height:8px;background:#858585"></div>
<div class="a" style="left:129.8px;top:477px;width:1px;height:8px;background:#858585"></div>
<div class="a" style="left:137.4px;top:477px;width:1px;height:8px;background:#858585"></div>
<div class="a" style="left:145.0px;top:477px;width:1px;height:9px;background:#858585"></div>
<div class="a" style="left:152.6px;top:477px;width:1px;height:8px;background:#858585"></div>
<div class="a" style="left:160.2px;top:477px;width:1px;height:8px;background:#858585"></div>
<div class="a" style="left:167.7px;top:477px;width:1px;height:8px;background:#858585"></div>
<div class="a" style="left:175.3px;top:477px;width:1px;height:8px;background:#858585"></div>
<div class="a" style="left:182.9px;top:477px;width:1px;height:9px;background:#858585"></div>
<div class="a" style="left:190.5px;top:477px;width:1px;height:8px;background:#858585"></div>
<div class="a" style="left:198.1px;top:477px;width:1px;height:8px;background:#858585"></div>
<div class="a" style="left:205.6px;top:477px;width:1px;height:8px;background:#858585"></div>
<div class="a" style="left:213.2px;top:477px;width:1px;height:8px;background:#858585"></div>
<div class="a" style="left:220.8px;top:477px;width:1px;height:9px;background:#858585"></div>
<div class="a" style="left:228.4px;top:477px;width:1px;height:8px;background:#858585"></div>
<div class="a" style="left:236.0px;top:477px;width:1px;height:8px;background:#858585"></div>
<div class="a" style="left:243.5px;top:477px;width:1px;height:8px;background:#858585"></div>
<div class="a" style="left:251.1px;top:477px;width:1px;height:8px;background:#858585"></div>
<div class="a" style="left:258.7px;top:477px;width:1px;height:9px;background:#858585"></div>
<div class="a" style="left:266.3px;top:477px;width:1px;height:8px;background:#858585"></div>
<div class="a" style="left:273.9px;top:477px;width:1px;height:8px;background:#858585"></div>
<div class="a" style="left:281.4px;top:477px;width:1px;height:8px;background:#858585"></div>
<div class="a" style="left:289.0px;top:477px;width:1px;height:8px;background:#858585"></div>
<div class="a" style="left:296.6px;top:477px;width:1px;height:9px;background:#858585"></div>
<div class="a" style="left:304.2px;top:477px;width:1px;height:8px;background:#858585"></div>
<div class="a" style="left:311.8px;top:477px;width:1px;height:8px;background:#858585"></div>
<div class="a" style="left:319.3px;top:477px;width:1px;height:8px;background:#858585"></div>
<div class="a" style="left:326.9px;top:477px;width:1px;height:8px;background:#858585"></div>
<div class="a" style="left:334.5px;top:477px;width:1px;height:9px;background:#858585"></div>
<div class="a" style="left:342.1px;top:477px;width:1px;height:8px;background:#858585"></div>
<div class="a" style="left:349.7px;top:477px;width:1px;height:8px;background:#858585"></div>
<div class="a" style="left:357.2px;top:477px;width:1px;height:8px;background:#858585"></div>
<div class="a" style="left:364.8px;top:477px;width:1px;height:8px;background:#858585"></div>
<div class="a" style="left:372.4px;top:477px;width:1px;height:9px;background:#858585"></div>
<div class="a" style="left:380.0px;top:477px;width:1px;height:8px;background:#858585"></div>
<div class="a" style="left:387.6px;top:477px;width:1px;height:8px;background:#858585"></div>
<div class="a" style="left:395.1px;top:477px;width:1px;height:8px;background:#858585"></div>
<div class="a" style="left:402.7px;top:477px;width:1px;height:8px;background:#858585"></div>
<div class="a" style="left:410.3px;top:477px;width:1px;height:9px;background:#858585"></div>
<div class="a" style="left:417.9px;top:477px;width:1px;height:8px;background:#858585"></div>
<div class="a" style="left:425.5px;top:477px;width:1px;height:8px;background:#858585"></div>
<div class="a" style="left:433.0px;top:477px;width:1px;height:8px;background:#858585"></div>
<div class="a" style="left:440.6px;top:477px;width:1px;height:8px;background:#858585"></div>
<div class="a" style="left:448.2px;top:477px;width:1px;height:9px;background:#858585"></div>
<div class="a" style="left:455.8px;top:477px;width:1px;height:8px;background:#858585"></div>
<div class="a" style="left:463.4px;top:477px;width:1px;height:8px;background:#858585"></div>
<div class="a" style="left:470.9px;top:477px;width:1px;height:8px;background:#858585"></div>
<div class="a" style="left:478.5px;top:477px;width:1px;height:8px;background:#858585"></div>
<div class="a" style="left:486.1px;top:477px;width:1px;height:9px;background:#858585"></div>
<div class="a" style="left:493.7px;top:477px;width:1px;height:8px;background:#858585"></div>
<div class="a" style="left:501.3px;top:477px;width:1px;height:8px;background:#858585"></div>
<div class="a" style="left:508.8px;top:477px;width:1px;height:8px;background:#858585"></div>
<div class="a" style="left:516.4px;top:477px;width:1px;height:8px;background:#858585"></div>
<div class="a" style="left:524.0px;top:477px;width:1px;height:9px;background:#858585"></div>
<div class="a" style="left:531.6px;top:477px;width:1px;height:8px;background:#858585"></div>
<div class="a" style="left:539.2px;top:477px;width:1px;height:8px;background:#858585"></div>
<div class="a" style="left:546.7px;top:477px;width:1px;height:8px;background:#858585"></div>
<div class="a" style="left:554.3px;top:477px;width:1px;height:8px;background:#858585"></div>
<div class="a" style="left:561.9px;top:477px;width:1px;height:9px;background:#858585"></div>
<div class="a" style="left:569.5px;top:477px;width:1px;height:8px;background:#858585"></div>
<div class="a" style="left:577.1px;top:477px;width:1px;height:8px;background:#858585"></div>
<div class="a" style="left:584.6px;top:477px;width:1px;height:8px;background:#858585"></div>
<div class="a" style="left:592.2px;top:477px;width:1px;height:8px;background:#858585"></div>
<div class="a" style="left:599.8px;top:477px;width:1px;height:9px;background:#858585"></div>
<div class="a" style="left:607.4px;top:477px;width:1px;height:8px;background:#858585"></div>
<div class="a" style="left:615.0px;top:477px;width:1px;height:8px;background:#858585"></div>
<div class="a" style="left:622.5px;top:477px;width:1px;height:8px;background:#858585"></div>
<div class="a" style="left:630.1px;top:477px;width:1px;height:8px;background:#858585"></div>
<div class="a" style="left:637.7px;top:477px;width:1px;height:9px;background:#858585"></div>
<div class="a" style="left:645.3px;top:477px;width:1px;height:8px;background:#858585"></div>
<div class="a" style="left:652.9px;top:477px;width:1px;height:8px;background:#858585"></div>
<div class="a" style="left:660.4px;top:477px;width:1px;height:8px;background:#858585"></div>
<div class="a" style="left:668.0px;top:477px;width:1px;height:8px;background:#858585"></div>
<div class="a" style="left:675.6px;top:477px;width:1px;height:9px;background:#858585"></div>
<div class="a" style="left:683.2px;top:477px;width:1px;height:8px;background:#858585"></div>
<div class="a" style="left:690.8px;top:477px;width:1px;height:8px;background:#858585"></div>
<div class="a" style="left:698.3px;top:477px;width:1px;height:8px;background:#858585"></div>
<div class="a" style="left:705.9px;top:477px;width:1px;height:8px;background:#858585"></div>
<div class="a" style="left:713.5px;top:477px;width:1px;height:9px;background:#858585"></div>
<div class="a" style="left:721.1px;top:477px;width:1px;height:8px;background:#858585"></div>
<div class="a" style="left:728.7px;top:477px;width:1px;height:8px;background:#858585"></div>
<div class="a" style="left:736.2px;top:477px;width:1px;height:8px;background:#858585"></div>
<div class="a" style="left:743.8px;top:477px;width:1px;height:8px;background:#858585"></div>
<div class="a" style="left:751.4px;top:477px;width:1px;height:9px;background:#858585"></div>
<div class="a" style="left:759.0px;top:477px;width:1px;height:8px;background:#858585"></div>
<div class="a" style="left:766.6px;top:477px;width:1px;height:8px;background:#858585"></div>
<div class="a" style="left:774.1px;top:477px;width:1px;height:8px;background:#858585"></div>
<div class="a" style="left:781.7px;top:477px;width:1px;height:8px;background:#858585"></div>
<div class="a" style="left:789.3px;top:477px;width:1px;height:9px;background:#858585"></div>
<div class="a" style="left:796.9px;top:477px;width:1px;height:8px;background:#858585"></div>
<div class="a" style="left:804.5px;top:477px;width:1px;height:8px;background:#858585"></div>
<div class="a" style="left:812.0px;top:477px;width:1px;height:8px;background:#858585"></div>
<div class="a" style="left:819.6px;top:477px;width:1px;height:8px;background:#858585"></div>
<div class="a" style="left:827.2px;top:477px;width:1px;height:9px;background:#858585"></div>
<div class="a" style="left:834.8px;top:477px;width:1px;height:8px;background:#858585"></div>
<div class="a" style="left:842.4px;top:477px;width:1px;height:8px;background:#858585"></div>
<div class="a" style="left:849.9px;top:477px;width:1px;height:8px;background:#858585"></div>
<div class="a" style="left:857.5px;top:477px;width:1px;height:8px;background:#858585"></div>
<div class="a" style="left:865.1px;top:477px;width:1px;height:9px;background:#858585"></div>
<div class="a" style="left:872.7px;top:477px;width:1px;height:8px;background:#858585"></div>
<div class="a" style="left:880.3px;top:477px;width:1px;height:8px;background:#858585"></div>
<div class="a" style="left:887.8px;top:477px;width:1px;height:8px;background:#858585"></div>
<div class="a" style="left:895.4px;top:477px;width:1px;height:8px;background:#858585"></div>
<div class="a" style="left:903.0px;top:477px;width:1px;height:9px;background:#858585"></div>
<div class="a" style="left:910.6px;top:477px;width:1px;height:8px;background:#858585"></div>
<div class="a" style="left:918.2px;top:477px;width:1px;height:8px;background:#858585"></div>
<div class="a" style="left:925.7px;top:477px;width:1px;height:8px;background:#858585"></div>
<div class="a" style="left:933.3px;top:477px;width:1px;height:8px;background:#858585"></div>
<div class="a" style="left:940.9px;top:477px;width:1px;height:9px;background:#858585"></div>
<div class="t" style="left:104.3px;top:486px;font-size:10px;color:#151515">5</div>
<div class="t" style="left:139.4px;top:486px;font-size:10px;color:#151515">10</div>
<div class="t" style="left:177.3px;top:486px;font-size:10px;color:#151515">15</div>
<div class="t" style="left:215.2px;top:486px;font-size:10px;color:#151515">20</div>
<div class="t" style="left:253.1px;top:486px;font-size:10px;color:#151515">25</div>
<div class="t" style="left:291.0px;top:486px;font-size:10px;color:#151515">30</div>
<div class="t" style="left:328.9px;top:486px;font-size:10px;color:#151515">35</div>
<div class="t" style="left:366.8px;top:486px;font-size:10px;color:#151515">40</div>
<div class="t" style="left:404.7px;top:486px;font-size:10px;color:#151515">45</div>
<div class="t" style="left:442.6px;top:486px;font-size:10px;color:#151515">50</div>
<div class="t" style="left:480.5px;top:486px;font-size:10px;color:#151515">55</div>
<div class="t" style="left:518.4px;top:486px;font-size:10px;color:#151515">60</div>
<div class="t" style="left:556.3px;top:486px;font-size:10px;color:#151515">65</div>
<div class="t" style="left:594.2px;top:486px;font-size:10px;color:#151515">70</div>
<div class="t" style="left:632.1px;top:486px;font-size:10px;color:#151515">75</div>
<div class="t" style="left:670.0px;top:486px;font-size:10px;color:#151515">80</div>
<div class="t" style="left:707.9px;top:486px;font-size:10px;color:#151515">85</div>
<div class="t" style="left:745.8px;top:486px;font-size:10px;color:#151515">90</div>
<div class="t" style="left:777.4px;top:486px;font-size:10px;color:#151515">80</div>
<div class="t" style="left:815.4px;top:486px;font-size:10px;color:#151515">85</div>
<div class="t" style="left:853.4px;top:486px;font-size:10px;color:#151515">90</div>
<div class="t" style="left:887.4px;top:486px;font-size:10px;color:#151515">80</div>
<div class="t" style="left:924.4px;top:486px;font-size:10px;color:#151515">85</div>
<!-- status area -->
<div class="a" style="left:0;top:496px;width:1000px;height:36px;background:#c8c8c8"></div>
<div class="a" style="left:0;top:497px;width:72px;height:15px;background:#e0c8c8;border-left:2px solid #8a8a8a;border-top:1px solid #f0f0f0"></div>
<div class="a" style="left:0;top:512px;width:72px;height:2px;background:#9a9a9a"></div>
<div class="a" style="left:0;top:514px;width:72px;height:17px;background:#fcfcfc;border-left:2px solid #8a8a8a"></div>
<div class="t" style="left:10px;top:518px;font-family:'Liberation Mono',monospace;font-size:8.5px;font-weight:bold;color:#2a2a2a;letter-spacing:-0.2px">Script.</div>
<div class="a" style="left:74px;top:497px;width:1px;height:35px;background:#999"></div>
<div class="a" style="left:77px;top:498px;width:304px;height:16px;background:#c4c4c4;border:1px solid #8a8a8a;border-right-color:#eee;border-bottom-color:#eee"></div>
<div class="t" style="left:82px;top:503px;font-size:9px;color:#000;transform:scaleX(.88);transform-origin:0 0">1 Object Selected</div>
<div class="a" style="left:77px;top:516px;width:506px;height:15px;background:#c4c4c4;border:1px solid #8a8a8a;border-right-color:#eee;border-bottom-color:#eee"></div>
<div class="t" style="left:82px;top:520px;font-size:9px;color:#000;transform:scaleX(.88);transform-origin:0 0">Rendering Time  0:00:10</div>
<svg style="left:388px;top:499px" width="9" height="11" viewBox="0 0 9 11"><path d="M2 5 L2 3 Q2 0.5 4.5 0.5 Q7 0.5 7 3 L7 5" stroke="#222" stroke-width="1.3" fill="none"/><rect x="1" y="5" width="7" height="6" fill="#222"/></svg>
<svg style="left:404px;top:498px" width="13" height="13" viewBox="0 0 13 13"><rect x="0.5" y="0.5" width="12" height="12" fill="none" stroke="#222" stroke-width="1"/><circle cx="6.5" cy="6.5" r="2" fill="#222"/><path d="M6.5 1 L6.5 3 M6.5 10 L6.5 12 M1 6.5 L3 6.5 M10 6.5 L12 6.5" stroke="#222" stroke-width="1"/></svg>
<div class="t" style="left:421px;top:501px;font-size:10px;color:#444">X:</div>
<div class="a" style="left:430px;top:498px;width:41px;height:15px;background:#e2e2e2;border-top:2px solid #2a2a2a;border-left:2px solid #2a2a2a;border-bottom:1px solid #f2f2f2;border-right:1px solid #f2f2f2"></div>
<div class="t" style="left:482px;top:501px;font-size:10px;color:#444">Y:</div>
<div class="a" style="left:490px;top:498px;width:41px;height:15px;background:#e2e2e2;border-top:2px solid #2a2a2a;border-left:2px solid #2a2a2a;border-bottom:1px solid #f2f2f2;border-right:1px solid #f2f2f2"></div>
<div class="t" style="left:541px;top:501px;font-size:10px;color:#444">Z:</div>
<div class="a" style="left:551px;top:498px;width:41px;height:15px;background:#e2e2e2;border-top:2px solid #2a2a2a;border-left:2px solid #2a2a2a;border-bottom:1px solid #f2f2f2;border-right:1px solid #f2f2f2"></div>
<div class="a" style="left:602px;top:498px;width:73px;height:16px;background:#c4c4c4;border:1px solid #8a8a8a;border-right-color:#eee;border-bottom-color:#eee"></div>
<div class="t" style="left:607px;top:502.5px;font-size:9px;color:#000;transform:scaleX(.88);transform-origin:0 0">Grid = 100.0mm</div>
<svg style="left:585px;top:516px" width="13" height="14" viewBox="0 0 13 14"><path d="M6.5 1 L12 4 L12 10 L6.5 13 L1 10 L1 4 Z M1 4 L6.5 7 L12 4 M6.5 7 L6.5 13" stroke="#333" stroke-width="1" fill="#eee"/></svg>
<div class="a" style="left:602px;top:516px;width:73px;height:15px;background:#c4c4c4;border:1px solid #8a8a8a;border-right-color:#eee;border-bottom-color:#eee"></div>
<div class="t" style="left:607px;top:520px;font-size:9px;color:#000;transform:scaleX(.88);transform-origin:0 0">Add Time Tag</div>
<div class="a" style="left:677px;top:494px;width:31px;height:36px;background:#c8c8c8;border:1px solid #eee;border-right-color:#888;border-bottom-color:#888"></div>
<svg style="left:684px;top:509.5px" width="19" height="9" viewBox="0 0 19 9"><circle cx="4" cy="4.5" r="3" fill="none" stroke="#111" stroke-width="2"/><path d="M7 4.5 L18 4.5 M14 4.5 L14 8 M17 4.5 L17 7.5" stroke="#111" stroke-width="2"/></svg>
<div class="a" style="left:711px;top:496px;width:37px;height:17px;background:#d0d0d0;border:1px solid #eee;border-right-color:#888;border-bottom-color:#888"></div>
<div class="t" style="left:713px;top:502px;font-size:9px;color:#000;transform:scaleX(.88);transform-origin:0 0">Auto Key</div>
<div class="a" style="left:711px;top:514px;width:37px;height:17px;background:#d0d0d0;border:1px solid #eee;border-right-color:#888;border-bottom-color:#888"></div>
<div class="t" style="left:715px;top:519px;font-size:9px;color:#000;transform:scaleX(.88);transform-origin:0 0">Set Key</div>
<div class="a" style="left:749px;top:498px;width:82px;height:15px;background:#d8d8d8;border-top:2px solid #3a3a3a;border-left:2px solid #3a3a3a"></div>
<div class="t" style="left:752px;top:501px;font-size:9px;color:#000;transform:scaleX(.88);transform-origin:0 0">Selected</div>
<div class="a" style="left:818px;top:500px;width:12px;height:11px;background:#ececec;border-right:1px solid #666;border-bottom:1px solid #666"></div>
<svg style="left:752px;top:515px" width="13" height="15" viewBox="0 0 13 15"><path d="M1 13 Q4 13 5 7 Q6 1 10 1" stroke="#c03040" stroke-width="1.2" fill="none"/><path d="M0 7 L12 7" stroke="#aaa" stroke-width="0.6"/><rect x="11" y="13" width="2" height="2" fill="#222"/></svg>
<div class="a" style="left:767px;top:515px;width:66px;height:15px;background:#d0d0d0;border:1px solid #eee;border-right-color:#888;border-bottom-color:#888"></div>
<div class="t" style="left:780px;top:518px;font-size:9px;color:#000;transform:scaleX(.88);transform-origin:0 0">Key Filters...</div>
<svg style="left:839px;top:500px" width="84" height="12" viewBox="0 0 84 12"><path d="M1 2 L1 10 M2 6 L8 2 L8 10 Z M8 6 L12 3 L12 9 Z" fill="#111" stroke="#111" stroke-width="1"/><path d="M18 6 L22 3 L22 9 Z M24 3 L24 9 L26 9 L26 3 Z" fill="#111"/><path d="M35 1 L35 11 L38 11 M39 3 L39 9 L46 6 Z" stroke="#111" stroke-width="1.2" fill="#111"/><path d="M54 3 L54 9 M57 3 L57 9 M59 3 L59 9 L63 6 Z" stroke="#111" stroke-width="1.5" fill="#111"/><path d="M70 3 L70 9 L76 6 Z M77 3 L77 9 L80 6 Z M82 2 L82 10" stroke="#111" stroke-width="1.2" fill="#111"/></svg>
<svg style="left:840px;top:518px" width="10" height="9" viewBox="0 0 10 9"><path d="M1 1 L1 8 M2 4.5 L5 1.5 L5 7.5 Z M5 4.5 L9 1.5 L9 7.5 Z" stroke="#111" fill="#111"/></svg>
<div class="a" style="left:856px;top:515px;width:47px;height:15px;background:#d8d8d8;border-top:2px solid #2a2a2a;border-left:2px solid #2a2a2a"></div>
<div class="t" style="left:859px;top:518px;font-size:9px;color:#000;transform:scaleX(.88);transform-origin:0 0">0</div>
<div class="a" style="left:903px;top:515px;width:9px;height:15px;background:#d6d6d6;border:1px solid #888"></div>
<div class="a" style="left:905px;top:518px;border-left:2.5px solid transparent;border-right:2.5px solid transparent;border-bottom:3px solid #111"></div>
<div class="a" style="left:905px;top:524px;border-left:2.5px solid transparent;border-right:2.5px solid transparent;border-top:3px solid #111"></div>
<svg style="left:914px;top:516px" width="13" height="13" viewBox="0 0 13 13"><rect x="0.5" y="1.5" width="11" height="10" fill="#eee" stroke="#555" stroke-width="0.8"/><circle cx="7" cy="7" r="3.5" fill="none" stroke="#c03040" stroke-width="1.2"/><path d="M7 5 L7 7 L9 7" stroke="#111" stroke-width="0.8" fill="none"/></svg>
<svg style="left:931px;top:498px" width="68" height="15" viewBox="0 0 68 15"><circle cx="5.5" cy="5.5" r="3.8" fill="#eee" stroke="#1a1a2a" stroke-width="1.6"/><path d="M8 8 L12.5 12.5" stroke="#1a1a2a" stroke-width="2.2"/><path d="M1 1 L3 3" stroke="#777" stroke-width="1"/><g transform="translate(18,0)"><rect x="3" y="1" width="10" height="9" fill="#f4dede" stroke="#b02838" stroke-width="1.2"/><path d="M8 1 L8 10 M3 5.5 L13 5.5" stroke="#b02838" stroke-width="1"/><circle cx="3.5" cy="10.5" r="2.6" fill="#ddd" stroke="#222" stroke-width="1.1"/><path d="M5.2 12.2 L7 14" stroke="#222" stroke-width="1.3"/></g><g transform="translate(35,0)"><path d="M4 4 L11 4 L11 11 L4 11 Z M4 4 L6.5 1.5 L13.5 1.5 L13.5 8.5 L11 11 M11 4 L13.5 1.5" fill="#b8c4dc" stroke="#2a3a6a" stroke-width="1.1"/><path d="M0.5 4 L0.5 0.5 L4 0.5 M10.5 14.5 L14.5 14.5 L14.5 10.5" stroke="#222" stroke-width="1.3" fill="none"/><rect x="14" y="13" width="1.6" height="1.6" fill="#222"/></g><g transform="translate(52,0)"><rect x="5" y="1" width="10" height="9" fill="#f4dede" stroke="#b02838" stroke-width="1.2"/><path d="M10 1 L10 10 M5 5.5 L15 5.5" stroke="#b02838" stroke-width="1"/><path d="M1 6 L7 6 L7 12 L1 12 Z M1 6 L3 4 L9 4 L9 10 L7 12" fill="#b8c4dc" stroke="#2a3a6a" stroke-width="1"/><rect x="14" y="13" width="1.6" height="1.6" fill="#222"/></g></svg>
<svg style="left:931px;top:515px" width="68" height="16" viewBox="0 0 68 16"><rect x="1" y="1.5" width="13" height="12" fill="#f0f0f0" stroke="#222" stroke-width="1.3" stroke-dasharray="2 1.2"/><circle cx="7" cy="6.5" r="3" fill="#fff" stroke="#222" stroke-width="1.2"/><path d="M9 8.5 L12 11.5" stroke="#222" stroke-width="1.6"/><g transform="translate(17,0)"><path d="M3 14 Q1 10 1.5 8 L3 7 L4 10 L4 3 Q4.5 1.8 5.5 3 L6 8 L6.5 1.5 Q7.5 0.5 8.5 1.5 L8.5 8 L9.5 2.5 Q10.5 1.5 11.2 3 L10.8 9 L12 6 Q13.2 5.5 13.2 7 Q12.5 11 10.5 14 Z" fill="#fff" stroke="#222" stroke-width="0.9"/></g><g transform="translate(34,0)"><circle cx="8" cy="8.5" r="4" fill="#d0d8e8" stroke="#1a2a5a" stroke-width="1.2"/><path d="M8 1 L8 12 M2 13 L14 13" stroke="#1a2a5a" stroke-width="1.2"/><rect x="1" y="13" width="1.8" height="1.8" fill="#222"/><rect x="13" y="13" width="1.8" height="1.8" fill="#222"/></g><g transform="translate(51,0)"><rect x="1" y="1" width="9" height="9" fill="#e8ecf4" stroke="#1a2a5a" stroke-width="1.3"/><rect x="5" y="5" width="9" height="9" fill="none" stroke="#1a2a5a" stroke-width="1.3"/><path d="M3 3 L7 7 M3 3 L3 6 M3 3 L6 3" stroke="#1a2a5a" stroke-width="1"/></g></svg>
<!-- watermark artifacts -->
<div class="a" style="left:866px;top:462px;width:80px;height:14px;background:#c8c8c8"></div>
<div class="a" style="left:830px;top:476px;width:115px;height:1px;background:#a0a0a0"></div>
<div class="a" style="left:866px;top:460px;width:7px;height:3.5px;background:#e6e07a"></div>
<div class="a" style="left:912px;top:460px;width:32px;height:3.5px;background:#e6e07a"></div>
<div class="a" style="left:866px;top:447px;width:14px;height:16px;border-radius:50%;background:rgba(245,245,245,.85)"></div>
<div class="a" style="left:896px;top:458px;width:15px;height:6px;border-radius:2px;background:rgba(240,240,225,.9)"></div>
<div class="a cb" style="left:878px;top:460px"></div>
<div class="a" style="left:884px;top:456px;width:3px;height:16px;background:rgba(250,250,250,.9);transform:rotate(35deg)"></div>
<div class="t" style="left:768px;top:496px;font-size:17.5px;letter-spacing:2.2px;color:rgba(252,252,252,.8);-webkit-text-stroke:.5px rgba(255,255,255,.6);text-shadow:0 0 1px rgba(60,60,60,.35)">jingyan.baidu.com</div>

<!-- taskbar -->
<div class="a" style="left:0;top:532px;width:1000px;height:6px;background:linear-gradient(90deg,#3a78a0 0%,#3f7ea4 30%,#3a78a0 55%,#2a5c88 65%,#22487a 100%)"></div>
<div class="a" style="left:0;top:532px;width:1000px;height:1px;background:#1c3a52"></div>
<div class="a" style="left:0;top:533px;width:1000px;height:1px;background:rgba(160,200,230,.45)"></div>
<div class="a" style="left:13px;top:535px;width:14px;height:4px;border-radius:7px 7px 0 0;background:#c4dcec"></div>
<div class="a" style="left:146px;top:535px;width:19px;height:3px;background:#a8d0ec"></div>
<div class="a" style="left:179px;top:532px;width:117px;height:6px;background:linear-gradient(90deg,#c0dcec,#a0c4dc 60%,#80a8c8);border:1px solid #1e3444;border-bottom:none"></div>
<div class="a" style="left:188px;top:535px;width:21px;height:3px;background:#2a80d8;border-radius:2px 2px 0 0"></div>
<div class="a" style="left:297px;top:532px;width:117px;height:6px;background:linear-gradient(90deg,#c8dcea,#a8c8dc 60%,#88b0cc);border:1px solid #1e3444;border-bottom:none"></div>
<div class="a" style="left:415px;top:532px;width:118px;height:6px;background:linear-gradient(#e0eef6,#c0dcea);border:1px solid #1e3444;border-bottom:none"></div>
<div class="a" style="left:427px;top:535px;width:18px;height:3px;background:#3a9a90"></div>
<div class="a" style="left:534px;top:532px;width:118px;height:6px;background:linear-gradient(#e0eef6,#c0dcea);border:1px solid #1e3444;border-bottom:none"></div>
<div class="a" style="left:545px;top:535px;width:11px;height:3px;background:#f0e8c0"></div>

</body></html>
